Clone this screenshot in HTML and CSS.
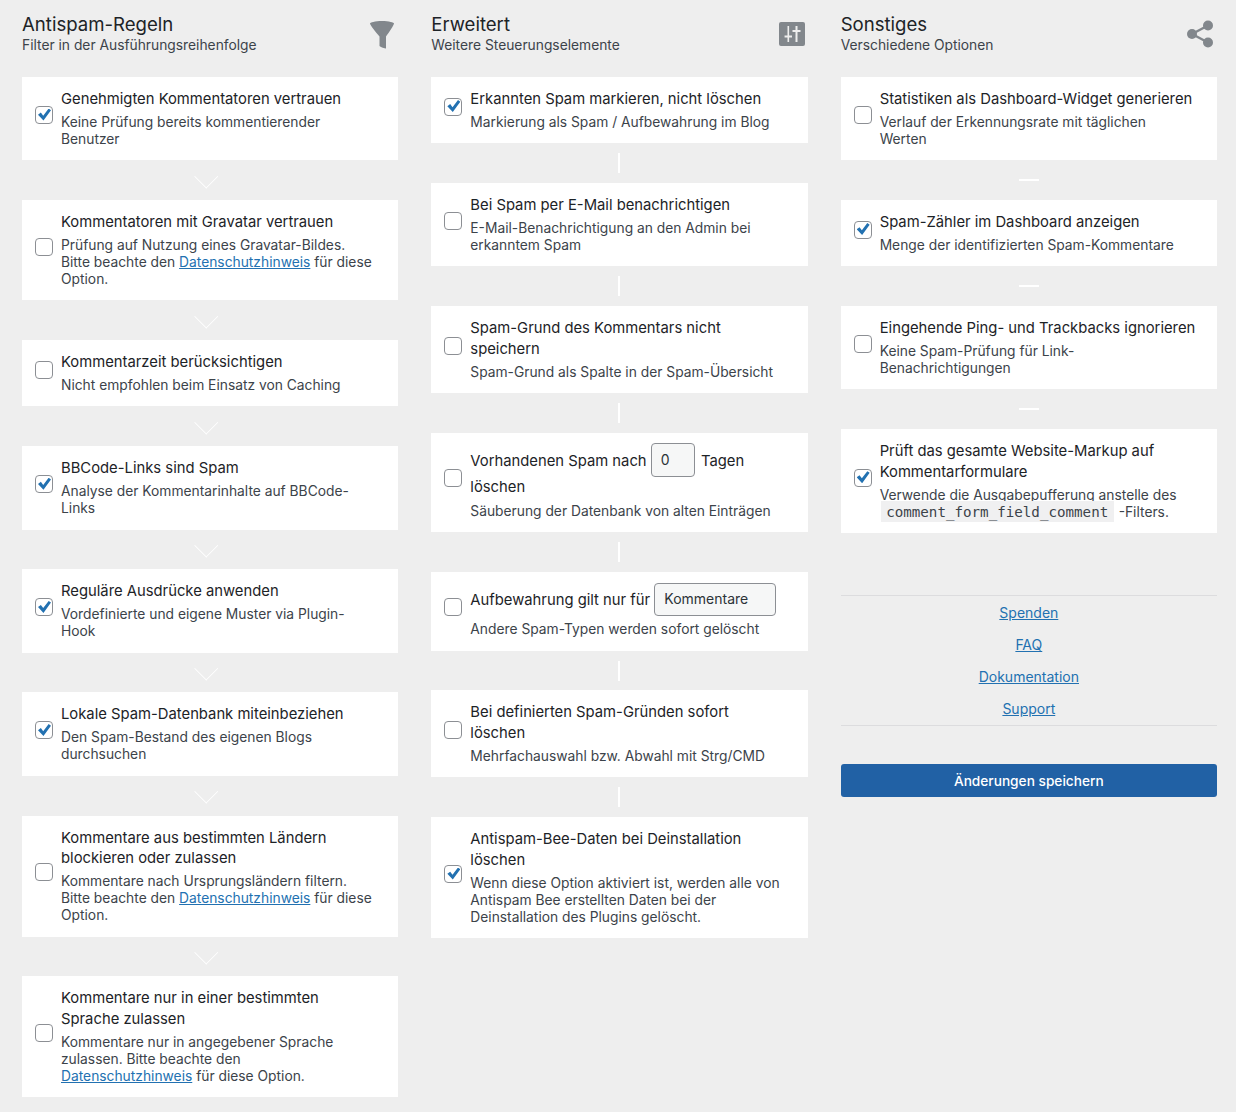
FILE: index.html
```html
<!DOCTYPE html>
<html lang="de">
<head>
<meta charset="utf-8">
<title>Antispam Bee</title>
<link rel="stylesheet" href="styles.css">
</head>
<body>
<form class="columns">
  <section class="col col-chevron">
    <header class="head">
      <div><h2>Antispam-Regeln</h2><p>Filter in der Ausführungsreihenfolge</p></div>
      <svg class="icon" width="26" height="30" viewBox="0 0 26 30"><path d="M1 3.500C1 2.500 6 1 13 1s12 1.500 12 2.500c0 1.500-5 9-8 13v12c-1.500 0-5-1-6.500-2.500V16.500C7 12.500 1 5 1 3.500Z"/></svg>
    </header>
    <label class="card"><input type="checkbox" checked><span class="txt"><span class="t">Genehmigten Kommentatoren vertrauen</span><span class="d">Keine Prüfung bereits kommentierender Benutzer</span></span></label>
    <div class="sep"></div>
    <label class="card"><input type="checkbox"><span class="txt"><span class="t">Kommentatoren mit Gravatar vertrauen</span><span class="d">Prüfung auf Nutzung eines Gravatar-Bildes.<br>Bitte beachte den <a href="#">Datenschutzhinweis</a> für diese Option.</span></span></label>
    <div class="sep"></div>
    <label class="card"><input type="checkbox"><span class="txt"><span class="t">Kommentarzeit berücksichtigen</span><span class="d">Nicht empfohlen beim Einsatz von Caching</span></span></label>
    <div class="sep"></div>
    <label class="card"><input type="checkbox" checked><span class="txt"><span class="t">BBCode-Links sind Spam</span><span class="d">Analyse der Kommentarinhalte auf BBCode-Links</span></span></label>
    <div class="sep"></div>
    <label class="card"><input type="checkbox" checked><span class="txt"><span class="t">Reguläre Ausdrücke anwenden</span><span class="d">Vordefinierte und eigene Muster via Plugin-Hook</span></span></label>
    <div class="sep"></div>
    <label class="card"><input type="checkbox" checked><span class="txt"><span class="t">Lokale Spam-Datenbank miteinbeziehen</span><span class="d">Den Spam-Bestand des eigenen Blogs durchsuchen</span></span></label>
    <div class="sep"></div>
    <label class="card"><input type="checkbox"><span class="txt"><span class="t">Kommentare aus bestimmten Ländern blockieren oder zulassen</span><span class="d">Kommentare nach Ursprungsländern filtern.<br>Bitte beachte den <a href="#">Datenschutzhinweis</a> für diese Option.</span></span></label>
    <div class="sep"></div>
    <label class="card"><input type="checkbox"><span class="txt"><span class="t">Kommentare nur in einer bestimmten Sprache zulassen</span><span class="d">Kommentare nur in angegebener Sprache zulassen. Bitte beachte den <a href="#">Datenschutzhinweis</a> für diese Option.</span></span></label>
  </section>

  <section class="col col-vline">
    <header class="head">
      <div><h2>Erweitert</h2><p>Weitere Steuerungselemente</p></div>
      <svg class="icon icon-sliders" width="26" height="24" viewBox="0 0 26 24"><path fill-rule="evenodd" d="M2 0h22a2 2 0 0 1 2 2v20a2 2 0 0 1-2 2H2a2 2 0 0 1-2-2V2a2 2 0 0 1 2-2Zm6.500 4v9.500H5.500l.1 2H8.500V20h1.600v-4.500H13v-2h-2.900V4H8.500Zm8 0v4H13.500v2h3v10h2V10h3V8h-3V4h-2Z"/></svg>
    </header>
    <label class="card"><input type="checkbox" checked><span class="txt"><span class="t">Erkannten Spam markieren, nicht löschen</span><span class="d">Markierung als Spam / Aufbewahrung im Blog</span></span></label>
    <div class="sep"></div>
    <label class="card"><input type="checkbox"><span class="txt"><span class="t">Bei Spam per E-Mail benachrichtigen</span><span class="d">E-Mail-Benachrichtigung an den Admin bei erkanntem Spam</span></span></label>
    <div class="sep"></div>
    <label class="card"><input type="checkbox"><span class="txt"><span class="t">Spam-Grund des Kommentars nicht speichern</span><span class="d">Spam-Grund als Spalte in der Spam-Übersicht</span></span></label>
    <div class="sep"></div>
    <div class="card card-field"><input type="checkbox"><span class="txt"><span class="t t-field">Vorhandenen Spam nach <input class="num" type="text" value="0"> Tagen löschen</span><span class="d d-field">Säuberung der Datenbank von alten Einträgen</span></span></div>
    <div class="sep"></div>
    <div class="card card-select"><input type="checkbox"><span class="txt"><span class="t t-field">Aufbewahrung gilt nur für <select class="sel"><option>Kommentare</option></select></span><span class="d d-select">Andere Spam-Typen werden sofort gelöscht</span></span></div>
    <div class="sep"></div>
    <label class="card"><input type="checkbox"><span class="txt"><span class="t">Bei definierten Spam-Gründen sofort löschen</span><span class="d">Mehrfachauswahl bzw. Abwahl mit Strg/CMD</span></span></label>
    <div class="sep"></div>
    <label class="card"><input type="checkbox" checked><span class="txt"><span class="t">Antispam-Bee-Daten bei Deinstallation löschen</span><span class="d">Wenn diese Option aktiviert ist, werden alle von Antispam Bee erstellten Daten bei der Deinstallation des Plugins gelöscht.</span></span></label>
  </section>

  <section class="col col-hline">
    <header class="head">
      <div><h2>Sonstiges</h2><p>Verschiedene Optionen</p></div>
      <svg class="icon icon-share" width="26" height="28" viewBox="0 0 26 28"><circle cx="5" cy="14" r="5"/><circle cx="21" cy="5.500" r="5"/><circle cx="21" cy="22.500" r="5"/><path class="share-line" d="M5 14 21 5.500M5 14l16 8.500"/></svg>
    </header>
    <label class="card"><input type="checkbox"><span class="txt"><span class="t">Statistiken als Dashboard-Widget generieren</span><span class="d">Verlauf der Erkennungsrate mit täglichen Werten</span></span></label>
    <div class="sep"></div>
    <label class="card"><input type="checkbox" checked><span class="txt"><span class="t">Spam-Zähler im Dashboard anzeigen</span><span class="d">Menge der identifizierten Spam-Kommentare</span></span></label>
    <div class="sep"></div>
    <label class="card"><input type="checkbox"><span class="txt"><span class="t">Eingehende Ping- und Trackbacks ignorieren</span><span class="d">Keine Spam-Prüfung für Link-Benachrichtigungen</span></span></label>
    <div class="sep"></div>
    <label class="card"><input type="checkbox" checked><span class="txt"><span class="t">Prüft das gesamte Website-Markup auf Kommentarformulare</span><span class="d">Verwende die Ausgabepufferung anstelle des <code>comment_form_field_comment</code> -Filters.</span></span></label>
    <nav class="links">
      <a href="#">Spenden</a>
      <a href="#">FAQ</a>
      <a href="#">Dokumentation</a>
      <a href="#">Support</a>
    </nav>
    <button class="save" type="button">Änderungen speichern</button>
  </section>
</form>
</body>
</html>
```
FILE: styles.css
```css
* { box-sizing: border-box; }
html, body { margin: 0; }
body {
  background: #eeeeee;
  color: #1d2327;
  font-family: Inter, "Liberation Sans", sans-serif;
  font-size: 14px;
  padding: 13px 19px 15px 22px;
}
.columns {
  display: grid;
  grid-template-columns: repeat(3, 1fr);
  column-gap: 33px;
  align-items: start;
}
.col { display: flex; flex-direction: column; min-width: 0; }
.head {
  display: flex;
  justify-content: space-between;
  align-items: flex-start;
  height: 64px;
  padding-right: 3px;
}
.head h2 {
  margin: 0;
  font-size: 18.600px;
  font-weight: 400;
  line-height: 23px;
  color: #1d2327;
}
.head p {
  margin: 0;
  font-size: 13.800px;
  line-height: 18px;
  color: #3c434a;
}
.icon { fill: #82878c; margin-top: 7px; flex: none; }
.icon-sliders { margin-top: 9px; }
.icon-share { margin-right: 1px; }
.share-line { fill: none; stroke: #82878c; stroke-width: 2.500; }

.card {
  display: flex;
  align-items: center;
  background: #fff;
  padding: 12px 21px 12.300px 13px;
}
.card input[type="checkbox"] {
  appearance: none;
  flex: none;
  position: relative;
  width: 18px;
  height: 18px;
  margin: 0 8px 7px 0;
  background: #fff;
  border: 1px solid #8c8f94;
  border-radius: 4px;
}
.card input[type="checkbox"]:checked::before {
  content: "";
  position: absolute;
  left: 2px;
  top: 1.500px;
  width: 13px;
  height: 12px;
  background: #2271b1;
  clip-path: polygon(0 52%, 22% 34%, 40% 60%, 82% 0, 100% 14%, 42% 100%);
}
.txt { display: block; flex: 1; min-width: 0; }
.t {
  display: block;
  font-size: 14.800px;
  line-height: 20.700px;
  color: #1d2327;
}
.d {
  display: block;
  margin-top: 4.300px;
  padding-right: 3px;
  font-size: 13.800px;
  line-height: 17px;
  color: #3c434a;
}
.t-field { line-height: 20px; }
.d-field { margin-top: 6.500px; }
.d-select { margin-top: 5.500px; }
a { color: #2271b1; text-decoration: underline; }

.num, .sel {
  font: inherit;
  font-size: 14px;
  color: #2c3338;
  background: #f6f7f7;
  border: 1px solid #8c8f94;
  border-radius: 4px;
  outline: 0;
  vertical-align: baseline;
}
.num { width: 44px; height: 34px; padding: 0 9px; margin: 0 2px 0 0; }
.sel { appearance: none; width: 122px; height: 33px; padding: 0 9px; margin: 0; }
.card-field { padding-top: 10px; padding-bottom: 11.600px; }
.card-select { padding-top: 11px; }

.sep {
  height: 39.800px;
  display: flex;
  align-items: center;
  justify-content: center;
  flex: none;
}
.col-chevron .sep::before {
  content: "";
  width: 15.500px;
  height: 15.500px;
  border-right: 1.500px solid #fff;
  border-bottom: 1.500px solid #fff;
  transform: translate(-4px, -4px) rotate(45deg);
}
.col-vline .sep::before {
  content: "";
  width: 2px;
  height: 20px;
  background: #fff;
}
.col-hline .sep::before {
  content: "";
  width: 20px;
  height: 2px;
  background: #fff;
}
code {
  font-family: "DejaVu Sans Mono", "Liberation Mono", monospace;
  font-size: 14.200px;
  background: #f0f0f1;
  padding: 3px 5.500px 2px;
  margin: 0 1px;
}
.links {
  display: flex;
  flex-direction: column;
  align-items: center;
  gap: 15px;
  margin-top: 62px;
  padding: 8px 0;
  border-top: 1px solid #dcdcde;
  border-bottom: 1px solid #dcdcde;
  font-size: 14px;
  line-height: 17px;
}
.save {
  margin-top: 38px;
  height: 33px;
  border: 0;
  border-radius: 3px;
  background: #2161a5;
  color: #fff;
  font: inherit;
  font-size: 13.700px;
  font-weight: 500;
}
```
